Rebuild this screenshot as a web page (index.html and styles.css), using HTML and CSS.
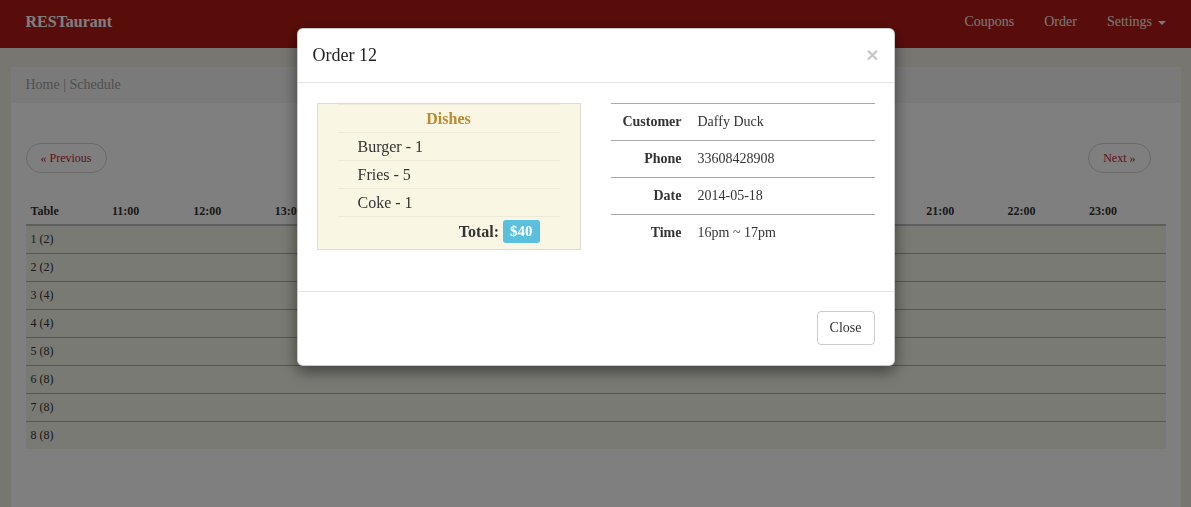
FILE: index.html
```html
<!DOCTYPE html>
<html>
<head>
<meta charset="utf-8">
<title>RESTaurant</title>
<link rel="stylesheet" href="styles.css">
</head>
<body>
<nav class="navbar">
  <div class="navbar-inner">
    <a class="brand">RESTaurant</a>
    <ul class="nav">
      <li>Coupons</li>
      <li>Order</li>
      <li>Settings <span class="caret"></span></li>
    </ul>
  </div>
</nav>
<div class="container">
  <div class="breadcrumb">Home | Schedule</div>
  <div class="content">
    <div class="pager">
      <span class="pill">« Previous</span>
      <span class="pill">Next »</span>
    </div>
    <table class="schedule">
      <thead>
        <tr><th>Table</th><th>11:00</th><th>12:00</th><th>13:00</th><th>14:00</th><th>15:00</th><th>16:00</th><th>17:00</th><th>18:00</th><th>19:00</th><th>20:00</th><th>21:00</th><th>22:00</th><th>23:00</th></tr>
      </thead>
      <tbody>
        <tr><td>1 (2)</td><td></td><td></td><td></td><td></td><td></td><td></td><td></td><td></td><td></td><td></td><td></td><td></td><td></td></tr>
        <tr><td>2 (2)</td><td></td><td></td><td></td><td></td><td></td><td></td><td></td><td></td><td></td><td></td><td></td><td></td><td></td></tr>
        <tr><td>3 (4)</td><td></td><td></td><td></td><td></td><td></td><td></td><td></td><td></td><td></td><td></td><td></td><td></td><td></td></tr>
        <tr><td>4 (4)</td><td></td><td></td><td></td><td></td><td></td><td></td><td></td><td></td><td></td><td></td><td></td><td></td><td></td></tr>
        <tr><td>5 (8)</td><td></td><td></td><td></td><td></td><td></td><td></td><td></td><td></td><td></td><td></td><td></td><td></td><td></td></tr>
        <tr><td>6 (8)</td><td></td><td></td><td></td><td></td><td></td><td></td><td></td><td></td><td></td><td></td><td></td><td></td><td></td></tr>
        <tr><td>7 (8)</td><td></td><td></td><td></td><td></td><td></td><td></td><td></td><td></td><td></td><td></td><td></td><td></td><td></td></tr>
        <tr><td>8 (8)</td><td></td><td></td><td></td><td></td><td></td><td></td><td></td><td></td><td></td><td></td><td></td><td></td><td></td></tr>
      </tbody>
    </table>
  </div>
</div>

<div class="backdrop"></div>
<div class="modal">
  <div class="modal-dialog">
    <div class="modal-header">
      <span class="close">×</span>
      <h4 class="modal-title">Order 12</h4>
    </div>
    <div class="modal-body">
      <div class="dishes">
        <table class="dish-table">
          <tr><th>Dishes</th></tr>
          <tr><td>Burger - 1</td></tr>
          <tr><td>Fries - 5</td></tr>
          <tr><td>Coke - 1</td></tr>
          <tr><td class="total"><div class="total-line"><b>Total:</b><span class="badge">$40</span></div></td></tr>
        </table>
      </div>
      <table class="info">
        <tr><th>Customer</th><td>Daffy Duck</td></tr>
        <tr><th>Phone</th><td>33608428908</td></tr>
        <tr><th>Date</th><td>2014-05-18</td></tr>
        <tr><th>Time</th><td>16pm ~ 17pm</td></tr>
      </table>
    </div>
    <div class="modal-footer">
      <span class="btn">Close</span>
    </div>
  </div>
</div>
</body>
</html>
```
FILE: styles.css
```css
* { box-sizing: border-box; }
html, body { margin: 0; padding: 0; }
body {
  font-family: "Liberation Serif", "Times New Roman", serif;
  color: #333;
  background: #efede3;
  height: 507px;
  overflow: hidden;
}
.navbar {
  background: #b31b16;
  height: 48px;
  margin-bottom: 19px;
}
.navbar-inner {
  width: 1170px;
  margin: 0 auto;
  padding: 12px 0 0 15px;
  display: flex;
  justify-content: space-between;
}
.brand {
  font-size: 16px;
  font-weight: bold;
  line-height: 20px;
  color: #fff;
}
.nav {
  list-style: none;
  margin: 0;
  padding: 0;
  display: flex;
}
.nav li {
  font-size: 14px;
  line-height: 20px;
  color: #f2f2f2;
  padding: 0 15px;
}
.caret {
  display: inline-block;
  width: 0;
  height: 0;
  margin-left: 2px;
  vertical-align: middle;
  border-top: 4px solid #f2f2f2;
  border-left: 4px solid transparent;
  border-right: 4px solid transparent;
}
.container {
  width: 1170px;
  margin: 0 auto;
  background: #fff;
  height: 440px;
}
.breadcrumb {
  background: #f5f5f5;
  padding: 8px 15px;
  font-size: 14px;
  line-height: 20px;
  color: #a0a0a0;
}
.content {
  padding: 0 15px;
}
.pager {
  display: flex;
  justify-content: space-between;
  padding: 40px 15px 0 0;
}
.pill {
  display: inline-block;
  font-size: 12px;
  line-height: 18px;
  padding: 5px 14px;
  border: 1px solid #d4d4d4;
  border-radius: 15px;
  color: #c0262d;
}
.schedule {
  width: 100%;
  margin-top: 26px;
  border-collapse: collapse;
  table-layout: fixed;
  font-size: 12px;
}
.schedule th {
  text-align: left;
  font-weight: bold;
  line-height: 15px;
  padding: 5px 5px 5px;
  border-bottom: 2px solid #bcbcbc;
}
.schedule td {
  line-height: 15px;
  padding: 6px 5px;
  border-top: 1px solid #aaa;
  background: #f4f4e8;
}
.backdrop {
  position: fixed;
  inset: 0;
  background: rgba(0, 0, 0, 0.5);
}
.modal {
  position: fixed;
  inset: 0;
}
.modal-dialog {
  width: 598px;
  margin: 28px auto 0;
  background: #fff;
  border: 1px solid rgba(0, 0, 0, 0.2);
  border-radius: 6px;
  box-shadow: 0 5px 15px rgba(0, 0, 0, 0.5);
}
.modal-header {
  padding: 14px 15px 15px;
  border-bottom: 1px solid #e5e5e5;
  display: flex;
  flex-direction: row-reverse;
  justify-content: space-between;
  align-items: flex-start;
}
.modal-title {
  margin: 0;
  font-size: 18px;
  font-weight: normal;
  line-height: 24px;
  color: #222;
}
.close {
  font-family: "Liberation Sans", Arial, sans-serif;
  font-size: 21px;
  font-weight: bold;
  line-height: 20px;
  color: #c8c8c8;
  margin-top: 2px;
  margin-right: 0;
}
.modal-body {
  padding: 20px 19px;
  display: flex;
  gap: 30px;
  align-items: flex-start;
}
.dishes {
  width: 264px;
  background: #faf6e4;
  border: 1px solid #dedbcf;
  padding: 0 20px 5px;
}
.dish-table {
  width: 100%;
  border-collapse: collapse;
  font-size: 16px;
}
.dish-table th,
.dish-table td {
  border-top: 1px solid #efead8;
  line-height: 19px;
  padding: 4px 20px;
  text-align: left;
}
.dish-table th {
  text-align: center;
  color: #bf8a2e;
  font-weight: bold;
}
.dish-table td.total {
  padding: 3px 20px 1px;
}
.total-line {
  display: flex;
  justify-content: flex-end;
  align-items: center;
  gap: 4px;
}
.badge {
  display: inline-block;
  background: #5bc0de;
  color: #fff;
  font-weight: bold;
  font-size: 15px;
  line-height: 17px;
  padding: 3px 7px;
  border-radius: 3px;
}
.info {
  width: 264px;
  border-collapse: collapse;
  font-size: 14px;
  margin-bottom: 20px;
}
.info th,
.info td {
  border-top: 1px solid #a8a8a8;
  line-height: 20px;
  padding: 8px;
}
.info th {
  text-align: right;
  width: 79px;
}
.info td {
  text-align: left;
}
.modal-footer {
  border-top: 1px solid #e5e5e5;
  padding: 19px 19px 20px;
  display: flex;
  justify-content: flex-end;
}
.btn {
  font-size: 14px;
  line-height: 20px;
  padding: 6px 12px;
  border: 1px solid #ccc;
  border-radius: 4px;
  color: #333;
  background: #fff;
}
```
